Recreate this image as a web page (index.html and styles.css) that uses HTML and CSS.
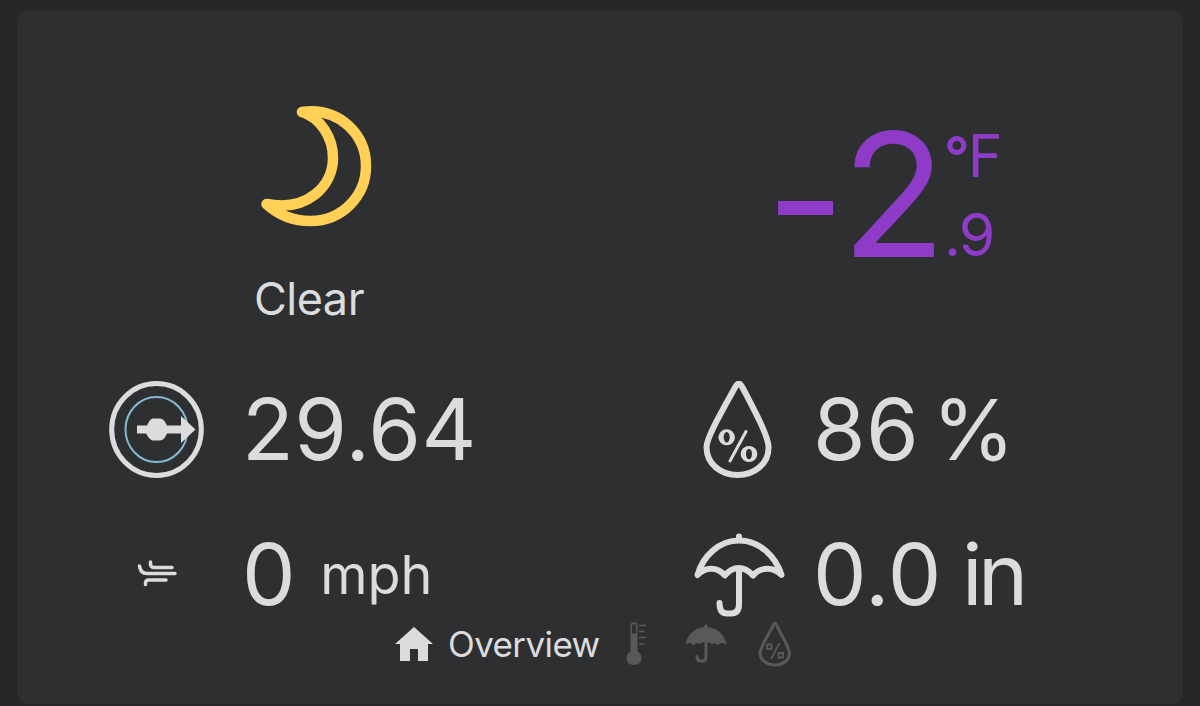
FILE: index.html
```html
<!DOCTYPE html>
<html lang="en">
<head>
    <meta charset="UTF-8">
    <meta name="viewport" content="width=device-width, initial-scale=1.0">
    <title>Weather Overview</title>
    <link rel="stylesheet" href="styles.css">
</head>
<body>
    <div class="card">
        <div class="current">
            <div class="condition">
                <svg class="moon" viewBox="0 0 112 124">
                    <path d="M41 8 C60 14 72 34 72 54 C72 82 46 108 5.500 100 C17 110.500 33 117 49.500 117 C81 117 105 92 105 62 C105 31 79 3 41 8Z"/>
                </svg>
                <div class="condition-text">Clear</div>
            </div>
            <div class="temperature">
                <span class="minus">-</span>
                <span class="degrees">2</span>
                <div class="temp-side">
                    <span class="unit"><b>°</b>F</span>
                    <span class="decimal">.9</span>
                </div>
            </div>
        </div>

        <div class="readings">
            <div class="reading">
                <svg class="icon" viewBox="0 0 98 98">
                    <ellipse class="ring" cx="49.500" cy="48.500" rx="44.800" ry="46"/>
                    <ellipse class="ring-inner" cx="49.500" cy="48.500" rx="31" ry="32.500"/>
                    <path class="fill" d="M30 44.500 H40 Q43 37.500 46 37.500 H53 Q57 37.500 60 44.500 H74 V35 L88.500 48.500 L74 62 V52.500 H60 Q57 59.500 53 59.500 H46 Q43 59.500 39 52.500 H30Z"/>
                </svg>
                <span class="value pressure">29.64</span>
            </div>
            <div class="reading">
                <svg class="icon" viewBox="0 0 98 98">
                    <path class="line" d="M50 2.500 C51.500 2.500 52 4 53.500 6.500 C67 32 79.500 56 79.500 66 C80 83 65 94 48.500 94 C32 94 17.500 83 17.500 66 C18 56 32 32 46 6.500 C47.500 4 48 2.500 50 2.500Z"/>
                    <ellipse class="fill" cx="37.700" cy="56.300" rx="8.300" ry="8"/>
                    <ellipse class="gap" cx="37.700" cy="56.300" rx="3" ry="5.300"/>
                    <ellipse class="fill" cx="60" cy="73" rx="8.300" ry="8"/>
                    <ellipse class="gap" cx="60" cy="73" rx="3" ry="5.300"/>
                    <path class="slash" d="M57 50.500 L41 80"/>
                </svg>
                <span class="value humidity">86</span>
                <span class="value percent">%</span>
            </div>
            <div class="reading">
                <svg class="icon" viewBox="0 0 98 98">
                    <path class="wind" d="M32.500 40 C33 44 35 47.500 40 47.500 H68 M43.500 36 V38.500 Q44 41.500 47 41.500 H65 M38.500 58.500 V56.500 Q39 54 41.500 54 H59"/>
                </svg>
                <span class="value wind-speed">0</span>
                <span class="wind-unit">mph</span>
            </div>
            <div class="reading">
                <svg class="icon" viewBox="0 0 98 98">
                    <path class="line" d="M8.500 49 C14 30 30 14.500 50 14.500 C71 14.500 87 31 92.500 49 C85 41 72 40 64 49.500 C55 39.500 44 39.500 36 49.500 C28 40 16 41 8.500 49Z"/>
                    <path class="line" d="M50 10.500 V14 M50 44 V78 Q50 87.500 42 87.500 H38 Q30.500 87.500 30.500 77"/>
                </svg>
                <span class="value rain">0.0</span>
                <span class="value rain-unit">in</span>
            </div>
        </div>

        <div class="tabs">
            <svg class="home" viewBox="0 0 38 34">
                <path d="M19 0 L38 17 H33 V34 H23 V22 H15 V34 H5 V17 H0Z"/>
            </svg>
            <span class="tab-name">Overview</span>
            <svg class="tab thermometer" viewBox="0 0 20 44">
                <path d="M4.500 3 Q4.500 0.500 7 0.500 H9 Q11.500 0.500 11.500 3 V29.500 Q15.500 32 15.500 35.500 Q15.500 43 8 43 Q0.500 43 0.500 35.500 Q0.500 32 4.500 29.500Z"/>
                <path class="gap" d="M6 2.500 H10 V11.500 H6Z"/>
                <path class="ticks" d="M13 3.500 H20 M13 9.500 H18.500 M13 15.500 H20 M13 22 H18.500"/>
            </svg>
            <svg class="tab umbrella" viewBox="0 0 42 40">
                <path d="M19.500 1.500 Q21 -0.500 22.500 1.500 V3 C33 4 40 11 41.500 21 Q37 17 33 21 Q29.500 18 27 20 Q24.500 18 21 18 Q17 18 14.500 20 Q12 18 8.500 21 Q4.500 17 0.500 21 C2 11 9 4 19.500 3Z"/>
                <path class="handle" d="M21 18 V33 Q21 37 17.500 37 H15.500 Q12 37 12 32.500"/>
            </svg>
            <svg class="tab drop" viewBox="0 0 34 46">
                <path class="outline" d="M17 2 C18 2 19 5 20 7 C25 17 31 26 31.500 32 C31.500 40 24 44 17 44 C10 44 2 40 2 32 C3 25 9 16 14 7 C15 5 16 2 17 2Z"/>
                <path class="outline thin" d="M9 23.500 H13.500 V28 H9Z M20.500 32 H25 V36.500 H20.500Z M21.500 22 L13 38"/>
            </svg>
        </div>
    </div>
</body>
</html>
```
FILE: styles.css
```css
body {
    font-family: 'Inter', sans-serif;
    background-color: #262729;
    color: #dcdcde;
    margin: 0;
    padding: 10px 17px 2px;
    height: 706px;
    box-sizing: border-box;
    overflow: hidden;
}

.card {
    height: 694px;
    background-color: #2e2f31;
    border-radius: 12px;
    overflow: hidden;
}

.current {
    display: flex;
    height: 346px;
}

.condition {
    display: flex;
    flex-direction: column;
    align-items: center;
    width: 584px;
    padding-top: 94px;
    box-sizing: border-box;
}

.moon {
    width: 112px;
    height: 124px;
    margin-left: 16px;
    fill: none;
    stroke: #ffd055;
    stroke-width: 10.5;
    stroke-linejoin: round;
}

.condition-text {
    font-size: 45px;
    line-height: 54px;
    margin-top: 44px;
    letter-spacing: -0.5px;
}

.temperature {
    display: flex;
    align-items: flex-start;
    padding: 81px 0 0 165px;
    color: #8e3cc8;
}

.minus,
.degrees {
    font-size: 172px;
    line-height: 206px;
}

.minus {
    padding-top: 4px;
}

.degrees {
    margin-left: -4px;
}

.temp-side {
    display: flex;
    flex-direction: column;
    padding-top: 29px;
    margin-left: -2px;
    gap: 6px;
}

.unit,
.decimal {
    font-size: 59px;
    line-height: 71px;
    letter-spacing: -2px;
}

.unit b {
    font-size: 56px;
    font-weight: 600;
}

.readings {
    display: grid;
    grid-template-columns: 582px 1fr;
    grid-template-rows: 145px 145px;
    margin-top: 1px;
    padding-left: 90px;
}

.reading {
    display: flex;
    align-items: center;
}

.icon {
    width: 98px;
    height: 98px;
    flex: none;
    fill: none;
    stroke: #dcdcde;
    stroke-linecap: round;
    stroke-linejoin: round;
}

.ring {
    stroke-width: 5;
}

.ring-inner {
    stroke: #83b9d2;
    stroke-width: 2;
}

.fill {
    fill: #dcdcde;
    stroke: none;
}

.line {
    stroke-width: 6;
}

.slash {
    stroke-width: 3;
}

.wind {
    stroke-width: 3.5;
}

.value {
    font-size: 85px;
    line-height: 104px;
    margin-left: 37px;
    letter-spacing: 0.5px;
}

.humidity,
.rain {
    margin-left: 26px;
}

.percent {
    font-size: 84px;
    margin-left: 13px;
}

.rain-unit {
    margin-left: 20px;
    letter-spacing: -4.5px;
}

.wind-unit {
    font-size: 54px;
    margin-left: 24px;
}

.tabs {
    display: flex;
    align-items: center;
    height: 46px;
    margin-top: -26px;
    padding-left: 378px;
}

.home {
    width: 38px;
    height: 34px;
    fill: #dcdcde;
}

.tab-name {
    font-size: 35px;
    line-height: 42px;
    margin-left: 15px;
    letter-spacing: -0.6px;
}

.tab {
    fill: #58595a;
    stroke: none;
}

.thermometer {
    width: 20px;
    height: 44px;
    margin-left: 26px;
}

.gap {
    fill: #2e2f31;
    stroke: none;
}

.ticks {
    stroke: #58595a;
    stroke-width: 1.5;
}

.umbrella {
    width: 42px;
    height: 40px;
    margin-left: 39px;
}

.handle {
    fill: none;
    stroke: #58595a;
    stroke-width: 3;
    stroke-linecap: round;
}

.drop {
    width: 34px;
    height: 46px;
    margin-left: 31px;
}

.outline {
    fill: none;
    stroke: #58595a;
    stroke-width: 3;
}

.thin {
    stroke-width: 1.8;
}
```
